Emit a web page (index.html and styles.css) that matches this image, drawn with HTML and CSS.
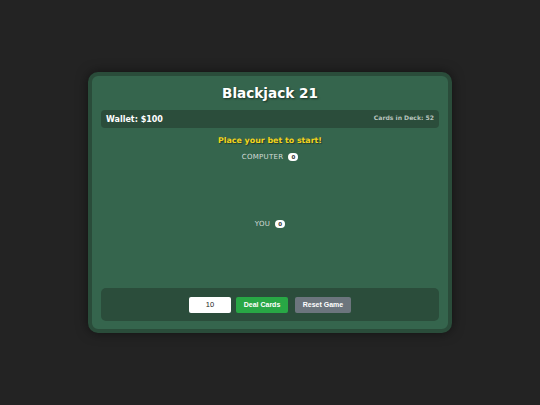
FILE: index.html
```html
<!DOCTYPE html>
<html>
<head>
<meta charset="utf-8">
<link rel="stylesheet" href="styles.css">
</head>
<body>
<div class="table">
  <h1 class="title">Blackjack 21</h1>
  <div class="infobar">
    <span class="wallet">Wallet: $100</span>
    <span class="deck">Cards in Deck: 52</span>
  </div>
  <div class="message">Place your bet to start!</div>
  <div class="side side-dealer">
    <div class="label">COMPUTER <span class="badge">0</span></div>
    <div class="hand hand-dealer"></div>
  </div>
  <div class="side">
    <div class="label">YOU <span class="badge">0</span></div>
    <div class="hand hand-player"></div>
  </div>
  <div class="controls">
    <input class="bet" type="text" value="10">
    <button class="btn btn-deal">Deal Cards</button>
    <button class="btn btn-reset">Reset Game</button>
  </div>
</div>
</body>
</html>
```

FILE: styles.css
```css
html, body {
  margin: 0;
  padding: 0;
}
body {
  background: #232323;
  min-height: 100vh;
  display: flex;
  align-items: center;
  justify-content: center;
  font-family: "DejaVu Sans", Verdana, sans-serif;
}
.table {
  width: 364px;
  box-sizing: border-box;
  border: 4px solid #2a4c3a;
  border-radius: 10px;
  background: #35654d;
  padding: 7px 9px 8px;
  box-shadow: 0 0 12px rgba(0, 0, 0, 0.5);
  display: flex;
  flex-direction: column;
}
.title {
  margin: 0;
  height: 20px;
  line-height: 20px;
  text-align: center;
  color: #fff;
  font-size: 13.6px;
  font-weight: bold;
  text-shadow: 1px 1px 2px rgba(0, 0, 0, 0.5);
}
.infobar {
  margin-top: 7px;
  height: 18px;
  background: #2b4d3b;
  border-radius: 4px;
  display: flex;
  align-items: center;
  justify-content: space-between;
  padding: 0 5px;
}
.wallet {
  color: #fff;
  font-size: 8px;
  font-weight: bold;
  margin-top: 1px;
}
.deck {
  color: #b8c4be;
  font-size: 6.1px;
  font-weight: bold;
  margin-top: -3px;
}
.message {
  margin-top: 7px;
  height: 12px;
  line-height: 12px;
  text-align: center;
  color: #f2d31b;
  font-size: 7.9px;
  font-weight: bold;
  text-shadow: 1px 1px 1px rgba(0, 0, 0, 0.4);
}
.side {
  display: flex;
  flex-direction: column;
  align-items: center;
}
.side-dealer { margin-top: 4px; }
.label {
  height: 12px;
  line-height: 12px;
  color: #d4dcd8;
  font-size: 7px;
  letter-spacing: 0.3px;
  display: flex;
  align-items: center;
  gap: 5px;
}
.badge {
  display: inline-block;
  background: #fff;
  color: #333;
  font-size: 5.5px;
  font-weight: bold;
  border-radius: 5px;
  padding: 0 3px;
  height: 8px;
  line-height: 8px;
  letter-spacing: 0;
}
.hand-dealer { height: 55px; }
.hand-player { height: 53px; }
.controls {
  margin-top: 5px;
  height: 33px;
  background: #2b4d3b;
  border-radius: 5px;
  display: flex;
  align-items: center;
  justify-content: center;
}
.bet {
  width: 42px;
  height: 16px;
  box-sizing: border-box;
  border: none;
  border-radius: 2px;
  background: #fff;
  text-align: center;
  font-family: "Liberation Sans", Arial, sans-serif;
  font-size: 7.5px;
  color: #222;
  padding: 0;
  margin-right: 5px;
}
.btn {
  height: 16px;
  box-sizing: border-box;
  border: none;
  border-radius: 2px;
  color: #fff;
  font-family: "Liberation Sans", Arial, sans-serif;
  font-weight: bold;
  font-size: 7px;
  padding: 0;
}
.btn-deal {
  width: 52px;
  background: #28a745;
  margin-right: 7px;
}
.btn-reset {
  width: 56px;
  background: #6c757d;
}
```
